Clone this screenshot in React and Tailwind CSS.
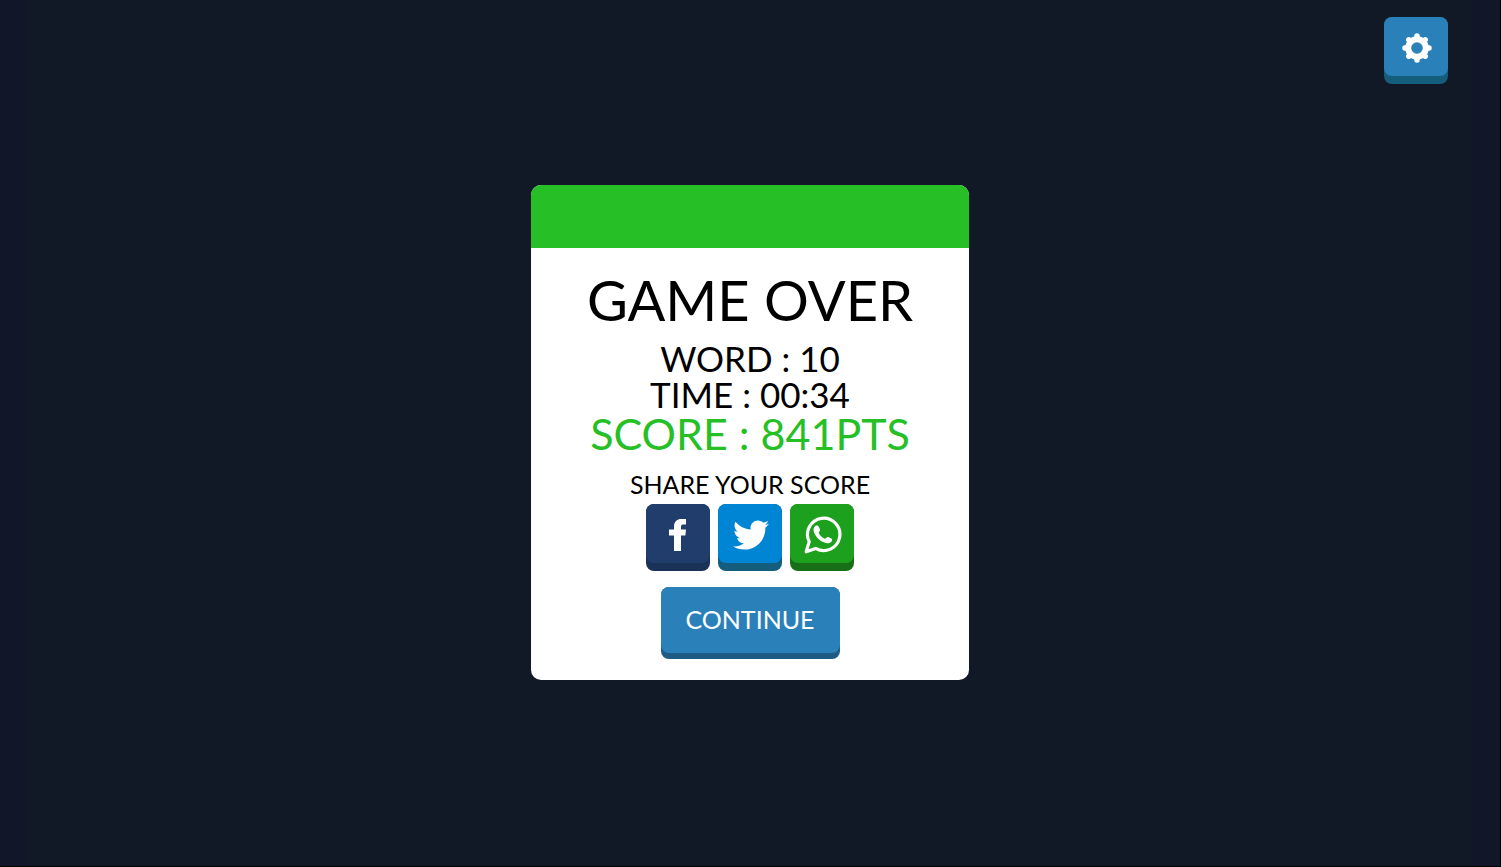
import React from 'react';
import { FaTwitter } from 'react-icons/fa';

const FacebookIcon = ({ className }) => (
    <svg className={className} viewBox="0 0 20 32" fill="currentColor" aria-hidden="true">
        <path d="M5 32V16.5H0V10.5H5V7.5C5 2.5 8 0 12.5 0H17V5.5H14C12.4 5.5 12 6.4 12 8V10.5H17L16.4 16.5H12V32Z" />
    </svg>
);

const WhatsAppIcon = ({ className }) => (
    <svg className={className} viewBox="0 0 38 38" aria-hidden="true">
        <path
            d="M5.2 25.6A16.2 16.2 0 1 1 11.6 32.4L2.2 35.8Z"
            fill="none"
            stroke="currentColor"
            strokeWidth="3.2"
            strokeLinejoin="round"
        />
        <path
            d="M11.6 9.8C13 9 14.2 9.4 14.8 10.8L16 13.6C16.4 14.8 15 16 14.6 16.8C15.8 19.6 18 21.6 21 22.8C22 22.4 23 20.6 24.2 21L27.4 22.6C28.6 23.2 28.2 25 27.2 26C25.4 27.6 22.8 27.6 20.2 26.6C15.6 24.8 12.2 21.4 10.2 17C9 14.2 9.2 11.4 11.6 9.8Z"
            fill="currentColor"
        />
    </svg>
);

const GearIcon = ({ className }) => (
    <svg className={className} viewBox="0 0 32 32" fill="none" stroke="currentColor" aria-hidden="true">
        <circle cx="16" cy="16" r="8.8" strokeWidth="6" />
        <g strokeWidth="5.5" strokeLinecap="round">
            <path d="M16 5V4M16 27v1M5 16H4M27 16h1" />
            <path d="M8.2 8.2l-.4-.4M23.8 8.2l.4-.4M8.2 23.8l-.4.4M23.8 23.8l.4.4" />
        </g>
    </svg>
);

const shareLinks = [
    { name: 'Facebook', icon: FacebookIcon, size: 'w-5 h-8', base: 'bg-[#1b3258]', face: 'bg-[#203d6b]' },
    { name: 'Twitter', icon: FaTwitter, size: 'w-9 h-9', base: 'bg-[#155d7c]', face: 'bg-[#0085d5]' },
    { name: 'WhatsApp', icon: WhatsAppIcon, size: 'w-[38px] h-[38px]', base: 'bg-[#177017]', face: 'bg-[#1da01d]' },
];

// Square button: a rounded face sitting on a darker base
const IconButton = ({ label, base, face, children }) => (
    <button type="button" aria-label={label} className={`block pb-2 rounded-lg text-white ${base}`}>
        <span className={`flex items-center justify-center w-16 h-[59px] pt-0.5 pl-0.5 rounded-lg ${face}`}>
            {children}
        </span>
    </button>
);

const App = () => {
    return (
        <div className="min-h-screen flex bg-[#111628] border-r border-b border-black px-7 font-['Lato',sans-serif]">
            <main className="relative flex-1 flex items-center justify-center pb-px bg-[#121926]">
                <div className="absolute top-[17px] right-6">
                    <IconButton label="Settings" base="bg-[#155d7c]" face="bg-[#2a80b9]">
                        <GearIcon className="w-8 h-8" />
                    </IconButton>
                </div>

                <section className="w-full max-w-[438px] rounded-[10px] overflow-hidden bg-white text-black text-center">
                    <div className="h-[63px] bg-[#26bf26]" />

                    <div className="flex flex-col items-center pt-5 pb-[21px]">
                        <h1 className="text-[56px] leading-[64px]">GAME OVER</h1>
                        <p className="mt-2 text-[35px] leading-9">WORD : 10</p>
                        <p className="text-[35px] leading-9">TIME : 00:34</p>
                        <p className="text-[43px] leading-[44px] text-[#26bf26]">SCORE : 841PTS</p>

                        <p className="mt-3 text-[25px] leading-8">SHARE YOUR SCORE</p>
                        <div className="mt-1 flex gap-2">
                            {shareLinks.map(({ name, icon: Icon, size, base, face }) => (
                                <IconButton key={name} label={`Share on ${name}`} base={base} face={face}>
                                    <Icon className={size} />
                                </IconButton>
                            ))}
                        </div>

                        <button type="button" className="mt-4 pb-1.5 rounded-lg bg-[#1e5b84] text-white">
                            <span className="flex items-center justify-center w-[179px] h-[66px] rounded-lg bg-[#2a80b9] text-[25px]">
                                CONTINUE
                            </span>
                        </button>
                    </div>
                </section>
            </main>
        </div>
    );
};

export default App;
